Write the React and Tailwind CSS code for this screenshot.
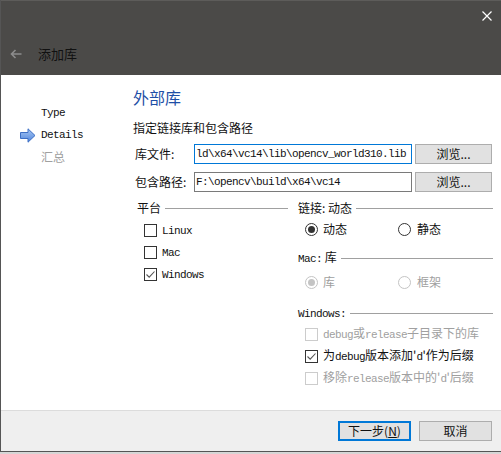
const M = ({ children }) => (
  <span className="font-['Liberation_Mono',monospace] text-[11px] tracking-[-0.6px]">{children}</span>
);

const Box = ({ checked, disabled }) => (
  <span
    className={`flex h-[13px] w-[13px] shrink-0 items-center justify-center border bg-white ${
      disabled ? "border-[#cccccc]" : "border-[#333333]"
    }`}
  >
    {checked && (
      <svg width="11" height="11" viewBox="0 0 11 11">
        <path d="M1.5 5.5 L4.2 8.2 L9.5 2.5" fill="none" stroke="#555" strokeWidth="1.1" />
      </svg>
    )}
  </span>
);

const Radio = ({ on, disabled }) => (
  <span
    className={`flex h-[13px] w-[13px] shrink-0 items-center justify-center rounded-full border bg-white ${
      disabled ? "border-[#c4c4c4]" : "border-[#333333]"
    }`}
  >
    {on && (
      <span
        className={`h-[7px] w-[7px] rounded-full ${disabled ? "bg-[#c4c4c4]" : "bg-[#333333]"}`}
      ></span>
    )}
  </span>
);

const GroupTitle = ({ children }) => (
  <div className="flex h-[16px] items-center gap-[4px] leading-[16px]">
    <span>{children}</span>
    <span className="h-px flex-1 bg-[#a0a0a0]"></span>
  </div>
);

const CheckRow = ({ checked, disabled, children }) => (
  <div className={`flex h-[22px] items-center gap-[5px] ${disabled ? "text-[#a0a0a0]" : ""}`}>
    <Box checked={checked} disabled={disabled} />
    <span className="leading-[16px]">{children}</span>
  </div>
);

const App = () => {
  return (
    <div className="h-[454px] w-[501px] bg-[#d6d6d6] font-['Noto_Sans_CJK_SC','Noto_Sans',sans-serif] text-[12px] text-[#111]">
      <div className="flex h-[452px] flex-col border-b border-l border-[#555555]">
        {/* title bar */}
        <div className="h-[75px] shrink-0 border-t border-[#5d5c5a] bg-[#4b4a48]">
          <div className="flex h-[30px] items-start justify-end pr-[9px] pt-[10px]">
            <svg width="10" height="10" viewBox="0 0 10 10">
              <path d="M0.5 0.5 L9.5 9.5 M9.5 0.5 L0.5 9.5" stroke="#fff" strokeWidth="1.2" />
            </svg>
          </div>
          <div className="mt-[14px] flex h-[18px] items-center pl-[9px]">
            <svg width="12" height="10" viewBox="0 0 12 10">
              <path d="M11.5 5 H1.5 M5.5 1 L1.5 5 L5.5 9" fill="none" stroke="#8c8c8c" strokeWidth="1.6" />
            </svg>
            <span className="ml-[16px] text-[13px] leading-[18px] text-[#111]">添加库</span>
          </div>
        </div>

        {/* body */}
        <div className="flex h-[335px] shrink-0 bg-white">
          <div className="w-[132px] shrink-0 pt-[27px]">
            <div className="flex h-[22px] items-center pl-[40px]">
              <M>Type</M>
            </div>
            <div className="flex h-[22px] items-center pl-[19px]">
              <svg width="16" height="15" viewBox="0 0 16 15" className="mr-[5px]">
                <defs>
                  <linearGradient id="ar" x1="0" y1="0" x2="0" y2="1">
                    <stop offset="0" stopColor="#a9c8f3" />
                    <stop offset="1" stopColor="#4f85dc" />
                  </linearGradient>
                </defs>
                <path d="M0.5 4.5 H8 V0.8 L15 7.5 L8 14.2 V10.5 H0.5 Z" fill="url(#ar)" stroke="#3d6fc4" strokeWidth="1" />
              </svg>
              <M>Details</M>
            </div>
            <div className="flex h-[22px] items-center pl-[40px] text-[#a0a0a0]">汇总</div>
          </div>

          <div className="flex-1 pr-[8px] pt-[12px]">
            <div className="text-[16px] leading-[20px] text-[#1e4ea6]">外部库</div>
            <div className="mt-[13px] leading-[16px]">指定链接库和包含路径</div>

            <div className="mt-[8px] flex h-[20px] items-center">
              <span className="w-[61px] shrink-0 pl-[2px]">库文件:</span>
              <div className="flex h-[20px] w-[218px] items-center overflow-hidden whitespace-nowrap border border-[#0078d7] pl-[1px]">
                <M>ld\x64\vc14\lib\opencv_world310.lib</M>
              </div>
              <button className="ml-[3px] h-[20px] w-[77px] border border-[#adadad] bg-[#e1e1e1] text-[12px] leading-[18px]">
                浏览...
              </button>
            </div>

            <div className="mt-[8px] flex h-[20px] items-center">
              <span className="w-[61px] shrink-0 pl-[2px]">包含路径:</span>
              <div className="flex h-[20px] w-[218px] items-center overflow-hidden whitespace-nowrap border border-[#7a7a7a] pl-[1px]">
                <M>F:\opencv\build\x64\vc14</M>
              </div>
              <button className="ml-[3px] h-[20px] w-[77px] border border-[#adadad] bg-[#e1e1e1] text-[12px] leading-[18px]">
                浏览...
              </button>
            </div>

            <div className="mt-[8px] grid grid-cols-[157px_1fr] gap-[8px]">
              <div className="pl-[4px] pr-[2px]">
                <GroupTitle>平台</GroupTitle>
                <div className="mt-[3px] pl-[7px]">
                  <CheckRow><M>Linux</M></CheckRow>
                  <CheckRow><M>Mac</M></CheckRow>
                  <CheckRow checked><M>Windows</M></CheckRow>
                </div>
              </div>

              <div>
                <GroupTitle>链接: 动态</GroupTitle>
                <div className="mt-[3px] flex h-[20px] items-center pl-[7px]">
                  <div className="flex w-[93px] items-center gap-[5px]">
                    <Radio on />
                    <span>动态</span>
                  </div>
                  <div className="flex items-center gap-[6px]">
                    <Radio />
                    <span>静态</span>
                  </div>
                </div>

                <div className="mt-[11px]">
                  <GroupTitle>
                    <M>Mac:</M> 库
                  </GroupTitle>
                </div>
                <div className="mt-[6px] flex h-[20px] items-center pl-[7px] text-[#a0a0a0]">
                  <div className="flex w-[93px] items-center gap-[5px]">
                    <Radio on disabled />
                    <span>库</span>
                  </div>
                  <div className="flex items-center gap-[6px]">
                    <Radio disabled />
                    <span>框架</span>
                  </div>
                </div>

                <div className="mt-[13px]">
                  <GroupTitle>
                    <M>Windows:</M>
                  </GroupTitle>
                </div>
                <div className="mt-[2px] pl-[7px]">
                  <CheckRow disabled>
                    <M>debug</M>或<M>release</M>子目录下的库
                  </CheckRow>
                  <CheckRow checked>
                    为<M>debug</M>版本添加'<M>d</M>'作为后缀
                  </CheckRow>
                  <CheckRow disabled>
                    移除<M>release</M>版本中的'<M>d</M>'后缀
                  </CheckRow>
                </div>
              </div>
            </div>
          </div>
        </div>

        {/* footer */}
        <div className="flex h-[41px] shrink-0 justify-end gap-[8px] border-t border-[#dcdcdc] bg-[#efefef] pr-[9px] pt-[10px]">
          <button className="h-[20px] w-[73px] border-2 border-[#0078d7] bg-[#e1e1e1] text-[12px] leading-[16px]">
            下一步(<u>N</u>)
          </button>
          <button className="h-[20px] w-[73px] border border-[#adadad] bg-[#e1e1e1] text-[12px] leading-[18px]">
            取消
          </button>
        </div>
      </div>
    </div>
  );
};

export default App;
